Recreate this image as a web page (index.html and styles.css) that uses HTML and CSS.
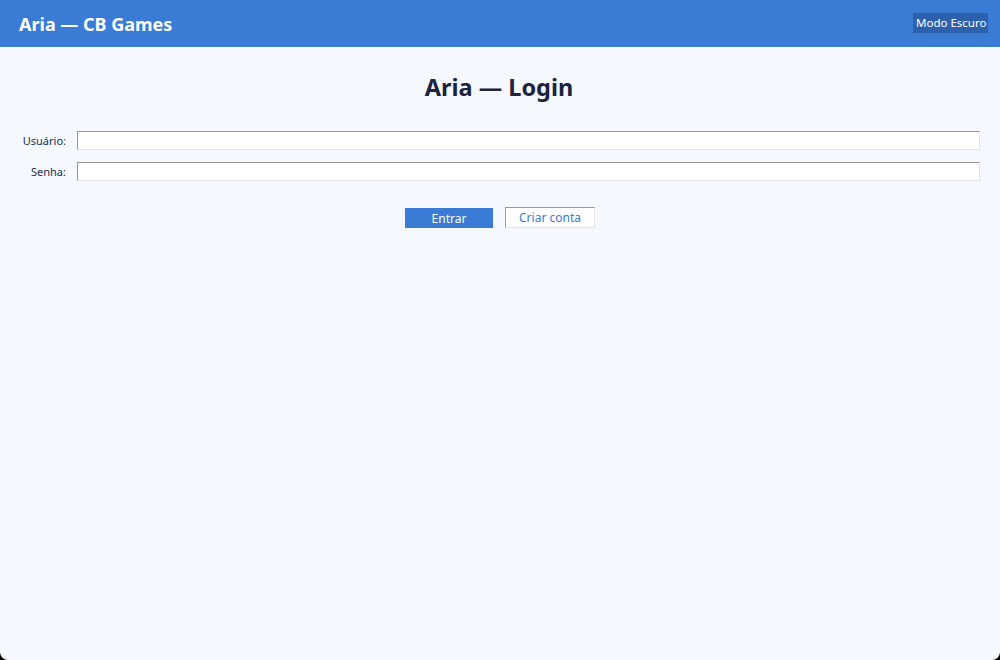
FILE: index.html
```html
<!DOCTYPE html>
<html lang="pt">
<head>
<meta charset="utf-8">
<title>Aria — Login</title>
<link rel="stylesheet" href="styles.css">
</head>
<body>
<div class="window">
  <header class="topbar">
    <h1 class="brand">Aria — CB Games</h1>
    <button class="dark-toggle" type="button">Modo Escuro</button>
  </header>
  <main class="content">
    <h2 class="page-title">Aria — Login</h2>
    <form class="login-form">
      <div class="field">
        <label class="field-label" for="user">Usuário:</label>
        <input class="field-input" id="user" type="text">
      </div>
      <div class="field">
        <label class="field-label" for="pass">Senha:</label>
        <input class="field-input" id="pass" type="password">
      </div>
      <div class="actions">
        <button class="btn btn-primary" type="button">Entrar</button>
        <button class="btn btn-secondary" type="button">Criar conta</button>
      </div>
    </form>
  </main>
</div>
</body>
</html>
```

FILE: styles.css
```css
html, body {
  margin: 0;
  padding: 0;
  height: 100%;
  background: #000;
}
body {
  font-family: "Noto Sans", "Open Sans", sans-serif;
}
.window {
  height: 660px;
  background: #f5f9ff;
  border-radius: 0 0 8px 8px;
  overflow: hidden;
  display: flex;
  flex-direction: column;
}
.topbar {
  height: 47px;
  background: #3a7bd5;
  display: flex;
  align-items: center;
  justify-content: space-between;
  padding: 0 12px 0 19px;
  box-sizing: border-box;
}
.brand {
  margin: 0;
  color: #fff;
  font-size: 18px;
  font-weight: 700;
}
.dark-toggle {
  background: #2e61ad;
  color: #fff;
  border: none;
  font-family: inherit;
  font-size: 11.5px;
  padding: 2px 3px;
  width: 75px;
  height: 20px;
  margin-top: -2px;
  white-space: nowrap;
}
.content {
  flex: 1;
  padding: 0 20px 0 22px;
}
.page-title {
  text-align: center;
  margin: 24px 4px 28px 0;
  font-size: 23.5px;
  font-weight: 700;
  color: #1c2340;
}
.login-form {
  display: flex;
  flex-direction: column;
}
.field {
  display: flex;
  align-items: center;
  gap: 11px;
  margin-bottom: 12px;
}
.field-label {
  width: 44px;
  text-align: right;
  font-size: 11px;
  color: #262c48;
  white-space: nowrap;
}
.field-input {
  flex: 1;
  height: 19px;
  box-sizing: border-box;
  background: #fff;
  border: 1px solid;
  border-color: #979797 #e3e3e3 #e3e3e3 #979797;
  padding: 0 3px;
  outline: none;
}
.actions {
  display: flex;
  justify-content: center;
  gap: 12px;
  margin-top: 14px;
  padding-right: 2px;
}
.btn {
  font-family: inherit;
  font-size: 12px;
  height: 21px;
  box-sizing: border-box;
  padding: 0;
}
.btn-primary {
  width: 88px;
  background: #3a7bd5;
  color: #fff;
  border: none;
  height: 20px;
  margin-top: 1px;
}
.btn-secondary {
  width: 90px;
  background: #fff;
  color: #3a7bd5;
  border: 1px solid;
  border-color: #9a9a9a #e3e3e3 #e3e3e3 #9a9a9a;
}
```
